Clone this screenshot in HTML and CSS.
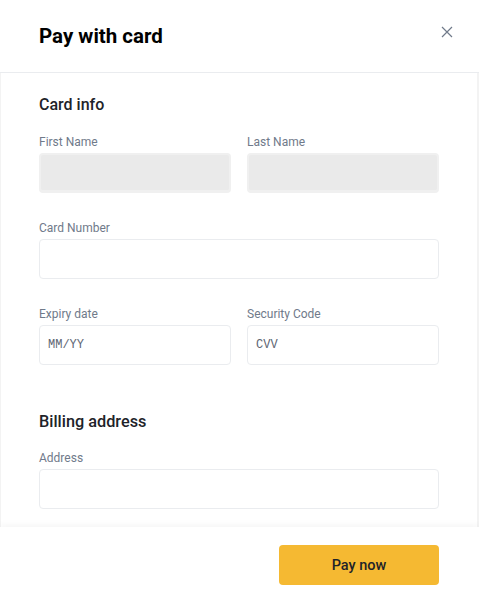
FILE: index.html
```html
<!DOCTYPE html>
<html>
<head>
<meta charset="utf-8">
<link rel="stylesheet" href="styles.css">
</head>
<body>
<div class="modal">
  <div class="header">
    <h1 class="title">Pay with card</h1>
    <button class="close" aria-label="Close">
      <svg width="12" height="12" viewBox="0 0 12 12"><path d="M1 1L11 11M11 1L1 11" stroke="#707a8a" stroke-width="1.2" fill="none"/></svg>
    </button>
  </div>
  <div class="body">
    <h2 class="section">Card info</h2>
    <div class="row two first">
      <div class="field"><label class="label">First Name</label><div class="input disabled"></div></div>
      <div class="field"><label class="label">Last Name</label><div class="input disabled"></div></div>
    </div>
    <div class="row">
      <div class="field"><label class="label">Card Number</label><div class="input"></div></div>
    </div>
    <div class="row two">
      <div class="field"><label class="label">Expiry date</label><div class="input"><span class="ph">MM/YY</span></div></div>
      <div class="field"><label class="label">Security Code</label><div class="input"><span class="ph">CVV</span></div></div>
    </div>
    <h2 class="section billing">Billing address</h2>
    <div class="row after-billing">
      <div class="field"><label class="label">Address</label><div class="input"></div></div>
    </div>
  </div>
  <div class="footer">
    <button class="pay">Pay now</button>
  </div>
</div>
</body>
</html>
```

FILE: styles.css
```css
* { box-sizing: border-box; }
html, body { margin: 0; padding: 0; background: #fff; }
body { font-family: Roboto, "Noto Sans", sans-serif; color: #1e2329; }
.modal {
  width: 479px;
  height: 600px;
  display: flex;
  flex-direction: column;
  background: #fff;
  overflow: hidden;
}
.header {
  height: 73px;
  flex: none;
  border-bottom: 1px solid #eaecef;
  display: flex;
  align-items: flex-start;
  justify-content: space-between;
  padding: 0 26px 0 39px;
}
.title {
  margin: 24px 0 0;
  font-size: 20.5px;
  line-height: 24px;
  font-weight: 700;
  color: #000;
}
.close {
  margin-top: 26px;
  border: 0;
  background: none;
  padding: 0;
  width: 12px;
  height: 12px;
  display: flex;
}
.body {
  flex: 1;
  padding: 20px 38px 0 38px;
  overflow: hidden;
  border-left: 1px solid #f3f3f3;
  border-right: 2px solid #f3f3f3;
}
.section {
  margin: 0;
  font-size: 16px;
  line-height: 24px;
  font-weight: 500;
  color: #1e2329;
}
.section.billing { margin-top: 45px; font-size: 16.3px; }
.row { display: flex; gap: 16px; margin-top: 27px; }
.row.first { margin-top: 17px; }
.row.after-billing { margin-top: 16px; }
.field { flex: 1; display: flex; flex-direction: column; }
.label {
  font-size: 12px;
  line-height: 16px;
  color: #707a8a;
  margin-bottom: 3px;
}
.input {
  height: 40px;
  border: 1px solid #eaecef;
  border-radius: 4px;
  background: #fff;
  display: flex;
  align-items: center;
  padding-left: 8px;
}
.input.disabled {
  background: #eaeaea;
  border: 2px solid #f0f0f0;
  border-width: 2px 2px 3px 2px;
}
.ph {
  font-family: "Liberation Mono", monospace;
  font-size: 12px;
  color: #5e6673;
}
.footer {
  height: 73px;
  flex: none;
  display: flex;
  justify-content: flex-end;
  align-items: flex-start;
  padding: 18px 40px 0;
  box-shadow: 0 -3px 6px rgba(0,0,0,0.035);
  position: relative;
  background: #fff;
}
.pay {
  width: 160px;
  height: 40px;
  border: 0;
  border-radius: 4px;
  background: #f5b932;
  font-family: Roboto, "Noto Sans", sans-serif;
  font-size: 14.5px;
  font-weight: 500;
  color: #1e2329;
}
```
